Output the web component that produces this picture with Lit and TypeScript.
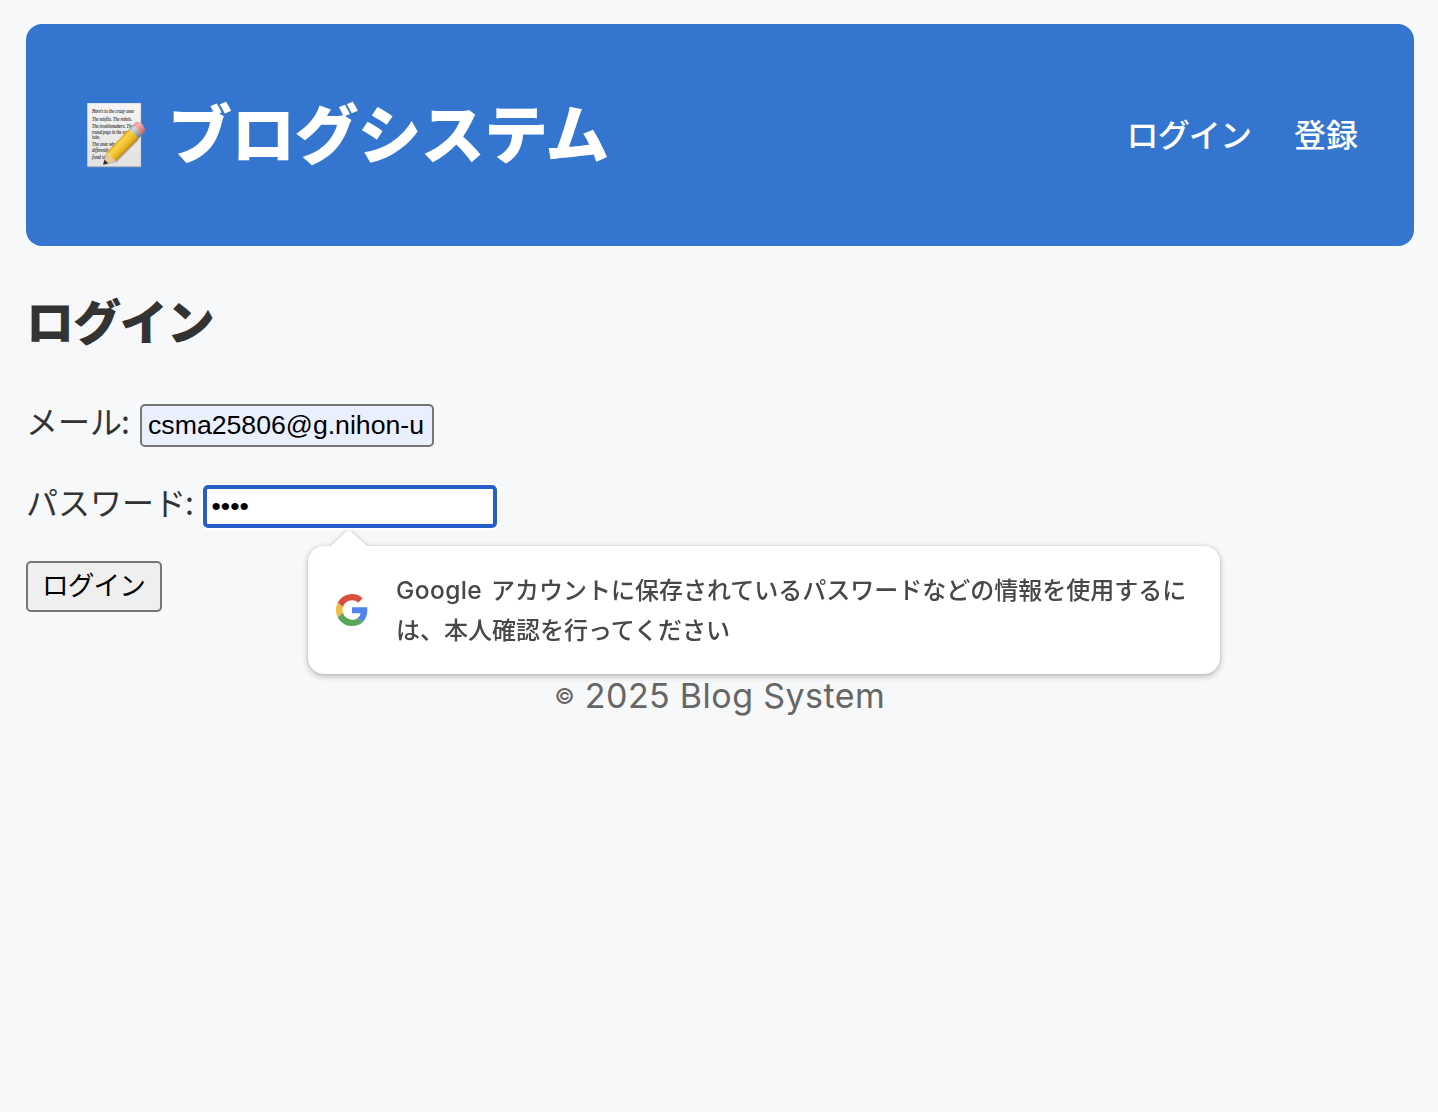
import { LitElement, html, css, svg } from "lit";
import { customElement } from "lit/decorators.js";

const NOTE_LINES: [string, number, number][] = [
  ["Here's to the crazy ones", 10, 42],
  ["The misfits. The rebels.", 17.3, 40],
  ["The troublemakers. The", 24.6, 41],
  ["round pegs in the square", 30.4, 42],
  ["holes.", 36, 8],
  ["The ones who see", 43, 31],
  ["differently. They're", 49, 31],
  ["fond of", 55.4, 14],
];

@customElement("memo-icon")
export class MemoIcon extends LitElement {
  static styles = css`
    :host {
      display: block;
      width: 60px;
      height: 66px;
      letter-spacing: 0;
    }
    .icon {
      display: block;
      width: 60px;
      height: 66px;
    }
    .script {
      font: italic 5.6px "Liberation Serif", serif;
      fill: #2c2c2c;
      stroke: #444;
      stroke-width: 0.12px;
    }
  `;

  render() {
    return html`
      <svg class="icon" viewBox="0 0 60 66" aria-label="memo">
        <defs>
          <linearGradient id="paper" x1="0" y1="0" x2="0" y2="1">
            <stop offset="0" stop-color="#f4f4f4" />
            <stop offset="1" stop-color="#e2e2e2" />
          </linearGradient>
          <linearGradient id="body" x1="30.5" y1="40" x2="41" y2="50" gradientUnits="userSpaceOnUse">
            <stop offset="0" stop-color="#dca520" />
            <stop offset="0.2" stop-color="#f8d550" />
            <stop offset="0.5" stop-color="#f2c230" />
            <stop offset="0.75" stop-color="#e0a820" />
            <stop offset="1" stop-color="#a87416" />
          </linearGradient>
          <linearGradient id="rubber" x1="47" y1="20" x2="57" y2="31" gradientUnits="userSpaceOnUse">
            <stop offset="0" stop-color="#e58f90" />
            <stop offset="0.4" stop-color="#f3b0b0" />
            <stop offset="1" stop-color="#cf6465" />
          </linearGradient>
          <linearGradient id="metal" x1="43" y1="24" x2="54" y2="35" gradientUnits="userSpaceOnUse">
            <stop offset="0" stop-color="#8f979e" />
            <stop offset="0.35" stop-color="#d5dade" />
            <stop offset="1" stop-color="#727c85" />
          </linearGradient>
        </defs>
        <rect x="1.2" y="1.2" width="54" height="64" fill="#a9adb2" />
        <rect x="1.5" y="1.2" width="53.2" height="63" fill="url(#paper)" />
        ${NOTE_LINES.map(
          ([text, y, width]) => svg`
            <text class="script" x="6" y=${y + 1.4} textLength=${width} lengthAdjust="spacingAndGlyphs">${text}</text>
          `,
        )}
        <path d="M17.5 63.5 L31 60 L53 38 L50 35 L24 56 Z" fill="#000" opacity="0.2" />
        <path d="M17 62.8 L20.6 50.6 L30 59.2 Z" fill="#e9c893" />
        <path d="M17 62.8 L18.5 57.7 L22.2 61.2 Z" fill="#2b2b2b" />
        <path d="M20.6 50.6 L42.4 27.5 Q49 29.5 52.4 36.9 L30 59.2 Q29 57 26.6 56.8 Q26 54 23.6 53.8 Q23 51.4 20.6 50.6 Z" fill="url(#body)" />
        <path d="M42.4 27.5 L46.3 23.4 Q52 25.2 56 32.9 L52.4 36.9 Q48 29.5 42.4 27.5 Z" fill="url(#metal)" />
        <path d="M46.3 23.4 L49.3 20.6 Q52 18.4 56.2 22 Q60 26.4 58.5 30 L56 32.9 Q52 25.2 46.3 23.4 Z" fill="url(#rubber)" />
      </svg>
    `;
  }
}

@customElement("account-popover")
export class AccountPopover extends LitElement {
  static styles = css`
    :host {
      display: block;
      filter: drop-shadow(0 2px 3px rgba(0, 0, 0, 0.27)) drop-shadow(0 0 1px rgba(0, 0, 0, 0.08));
    }
    .arrow {
      display: block;
      width: 36px;
      height: 16px;
      margin-left: 23px;
      background: #fff;
      clip-path: polygon(0 100%, 16px 1px, 19px 1px, 100% 100%);
    }
    .card {
      display: flex;
      align-items: center;
      box-sizing: border-box;
      width: 912px;
      height: 128px;
      padding: 0 28px;
      gap: 28px;
      border-radius: 16px;
      background: #fff;
    }
    .logo {
      flex: none;
      width: 32px;
      height: 32px;
    }
    .message {
      margin: 0;
      padding-bottom: 2px;
      color: #474747;
      font: 500 24px/40px "Noto Sans CJK JP", sans-serif;
      white-space: nowrap;
    }
    .line {
      display: flex;
      height: 40px;
    }
    .brand {
      width: 95px;
      padding-top: 1px;
      font: 500 24.5px/40px Inter, sans-serif;
      letter-spacing: 0.4px;
    }
  `;

  render() {
    return html`
      <span class="arrow"></span>
      <div class="card">
        <svg class="logo" viewBox="0 0 48 48" aria-hidden="true">
          <path fill="#d94f3f" d="M24 9.5c3.54 0 6.71 1.22 9.21 3.6l6.85-6.85C35.9 2.38 30.47 0 24 0 14.62 0 6.51 5.38 2.56 13.22l7.98 6.19C12.43 13.72 17.74 9.5 24 9.5z" />
          <path fill="#5083ee" d="M46.98 24.55c0-1.57-.15-3.09-.38-4.55H24v9.02h12.94c-.58 2.96-2.26 5.48-4.78 7.18l7.73 6c4.51-4.18 7.09-10.36 7.09-17.65z" />
          <path fill="#f1bd42" d="M10.53 28.59c-.48-1.45-.76-2.99-.76-4.59s.27-3.14.76-4.59l-7.98-6.19C.92 16.46 0 20.12 0 24c0 3.88.92 7.54 2.56 10.78l7.97-6.19z" />
          <path fill="#58a55c" d="M24 48c6.48 0 11.93-2.13 15.89-5.81l-7.73-6c-2.15 1.45-4.92 2.3-8.16 2.3-6.26 0-11.57-4.22-13.47-9.91l-7.98 6.19C6.51 42.62 14.62 48 24 48z" />
        </svg>
        <p class="message">
          <span class="line"><span class="brand">Google</span>アカウントに保存されているパスワードなどの情報を使用するに</span>
          <span class="line">は、本人確認を行ってください</span>
        </p>
      </div>
    `;
  }
}

@customElement("app-root")
export class AppRoot extends LitElement {
  static styles = css`
    :host {
      display: block;
      box-sizing: border-box;
      min-height: 1112px;
      padding: 24px 24px 0 26px;
      background: #f7f8fa;
      color: #333;
      font: 32px/48px "Noto Sans CJK JP", sans-serif;
    }
    .header {
      display: flex;
      align-items: center;
      justify-content: space-between;
      box-sizing: border-box;
      height: 222px;
      padding: 0 56px 0 60px;
      border-radius: 16px;
      background: #3375cf;
      color: #fff;
    }
    .title {
      display: flex;
      align-items: center;
      gap: 22px;
      margin: 0;
      font-size: 64px;
      font-weight: 800;
      line-height: 96px;
      letter-spacing: -0.8px;
    }
    .name {
      padding-bottom: 10px;
    }
    .nav {
      display: flex;
      gap: 43px;
      padding-bottom: 4px;
      font-weight: 500;
    }
    .link {
      color: inherit;
      text-decoration: none;
    }
    .kana {
      letter-spacing: -0.9px;
    }
    .heading {
      margin: 37px 0 0;
      font-size: 48px;
      font-weight: 800;
      line-height: 72px;
      letter-spacing: -1.1px;
    }
    .form {
      display: flex;
      flex-direction: column;
      align-items: flex-start;
      margin-top: 49px;
    }
    .row {
      display: flex;
      align-items: center;
      height: 43px;
      margin-bottom: 38px;
    }
    .label {
      padding-bottom: 12px;
      margin-right: 10px;
    }
    .colon {
      display: inline-block;
      width: 9px;
      margin-left: -1px;
    }
    .password {
      margin-right: 9px;
    }
    .field {
      box-sizing: border-box;
      width: 294px;
      height: 43px;
      margin: 0;
      padding: 0 6px;
      border: 2px solid #767676;
      border-radius: 5px;
      outline: none;
      background: #e9effd;
      color: #000;
      font: 26.67px "Liberation Sans", sans-serif;
    }
    .focused {
      padding: 0 4.5px 1px;
      border: 4px solid #265fc8;
      background: #fff;
      box-shadow: 0 0 0 2px #fff;
    }
    .anchor {
      position: relative;
      display: flex;
    }
    .popover {
      position: absolute;
      left: 105px;
      top: 45px;
      z-index: 1;
    }
    .submit {
      box-sizing: border-box;
      width: 136px;
      height: 51px;
      margin: -5px 0 0;
      padding: 0 1px 5px 0;
      border: 2px solid #767676;
      border-radius: 5px;
      background: #efefef;
      color: #000;
      font: 26.67px/40px "Noto Sans CJK JP", sans-serif;
      letter-spacing: -0.9px;
    }
    .footer {
      display: flex;
      justify-content: center;
      align-items: center;
      gap: 9.5px;
      margin-top: 60px;
      color: #666;
      font: 34px/48px Inter, sans-serif;
      letter-spacing: 0.5px;
      word-spacing: -0.5px;
    }
    .mark {
      font-size: 22px;
      font-weight: 500;
    }
  `;

  render() {
    return html`
      <header class="header">
        <h1 class="title"><memo-icon></memo-icon><span class="name">ブログシステム</span></h1>
        <nav class="nav">
          <a class="link kana" href="#login">ログイン</a>
          <a class="link" href="#register">登録</a>
        </nav>
      </header>
      <h2 class="heading">ログイン</h2>
      <form class="form">
        <div class="row">
          <label class="label" for="email">メール<span class="colon">:</span></label>
          <input class="field" id="email" type="text" value="csma25806@g.nihon-u" />
        </div>
        <div class="row">
          <label class="label password" for="password">パスワード<span class="colon">:</span></label>
          <div class="anchor">
            <input class="field focused" id="password" type="password" value="1234" />
            <account-popover class="popover"></account-popover>
          </div>
        </div>
        <button class="submit" type="button">ログイン</button>
      </form>
      <footer class="footer"><span class="mark">©</span><span>2025 Blog System</span></footer>
    `;
  }
}
